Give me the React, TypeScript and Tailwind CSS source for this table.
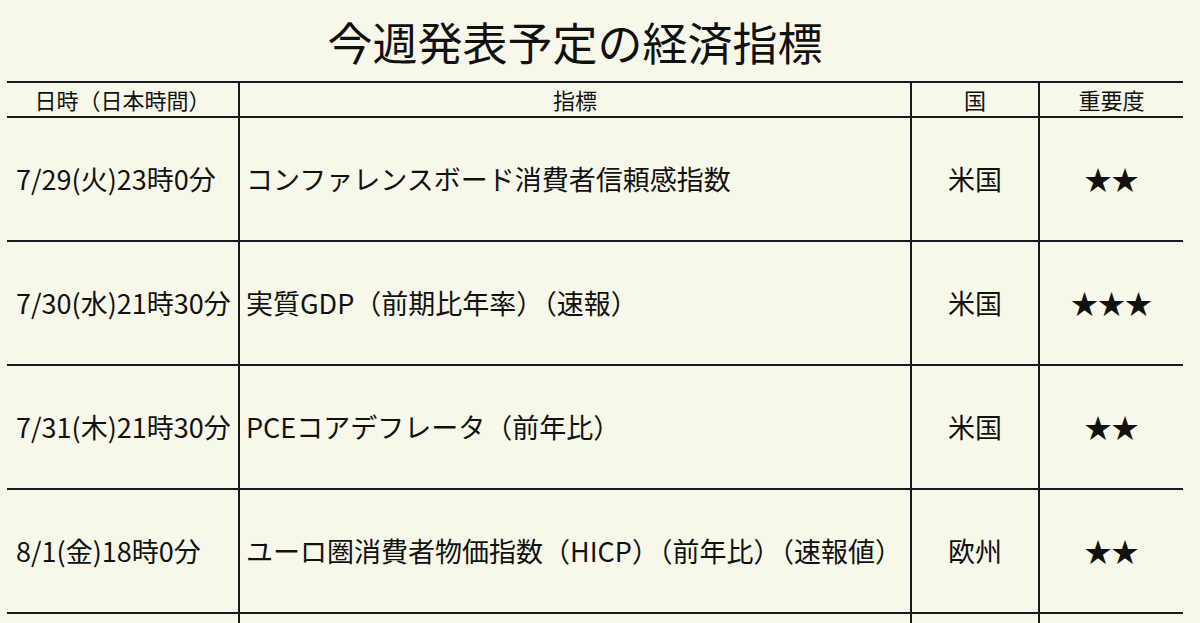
const rows = [
  { date: '7/29(火)23時0分', name: 'コンファレンスボード消費者信頼感指数', country: '米国', stars: '★★' },
  { date: '7/30(水)21時30分', name: '実質GDP（前期比年率）（速報）', country: '米国', stars: '★★★' },
  { date: '7/31(木)21時30分', name: 'PCEコアデフレータ（前年比）', country: '米国', stars: '★★' },
  { date: '8/1(金)18時0分', name: 'ユーロ圏消費者物価指数（HICP）（前年比）（速報値）', country: '欧州', stars: '★★' },
  { date: '', name: '', country: '', stars: '' },
];

const grid = 'grid grid-cols-[231px_672px_128px_145px]';

export default function App() {
  return (
    <div
      className="min-h-screen bg-[#f8f8ea] text-[#111] pl-[7px]"
      style={{ fontFamily: '"Noto Sans CJK JP", "Noto Sans", sans-serif' }}
    >
      {/* title */}
      <div className="h-[81px] w-[1176px] flex items-center justify-center pr-[40px] pt-[1px]">
        <h1 className="text-[45px] leading-none">今週発表予定の経済指標</h1>
      </div>

      {/* table */}
      <div className="w-[1176px] border-t-2 border-[#1a1a1a]">
        <div className={`${grid} h-[35px] border-b-2 border-[#1a1a1a] text-[22px]`}>
          <div className="flex items-center justify-center">日時（日本時間）</div>
          <div className="flex items-center justify-center border-l-2 border-[#1a1a1a]">指標</div>
          <div className="flex items-center justify-center border-l-2 border-[#1a1a1a]">国</div>
          <div className="flex items-center justify-center border-l-2 border-[#1a1a1a]">重要度</div>
        </div>
        {rows.map((r, i) => (
          <div key={i} className={`${grid} h-[124px] border-b-2 border-[#1a1a1a] text-[27px]`}>
            <div className="flex items-center pl-[9px] whitespace-nowrap">{r.date}</div>
            <div className="flex items-center pl-[6px] border-l-2 border-[#1a1a1a] whitespace-nowrap">
              {r.name}
            </div>
            <div className="flex items-center justify-center border-l-2 border-[#1a1a1a]">{r.country}</div>
            <div className="flex items-center justify-center border-l-2 border-[#1a1a1a]">{r.stars}</div>
          </div>
        ))}
      </div>
    </div>
  );
}
